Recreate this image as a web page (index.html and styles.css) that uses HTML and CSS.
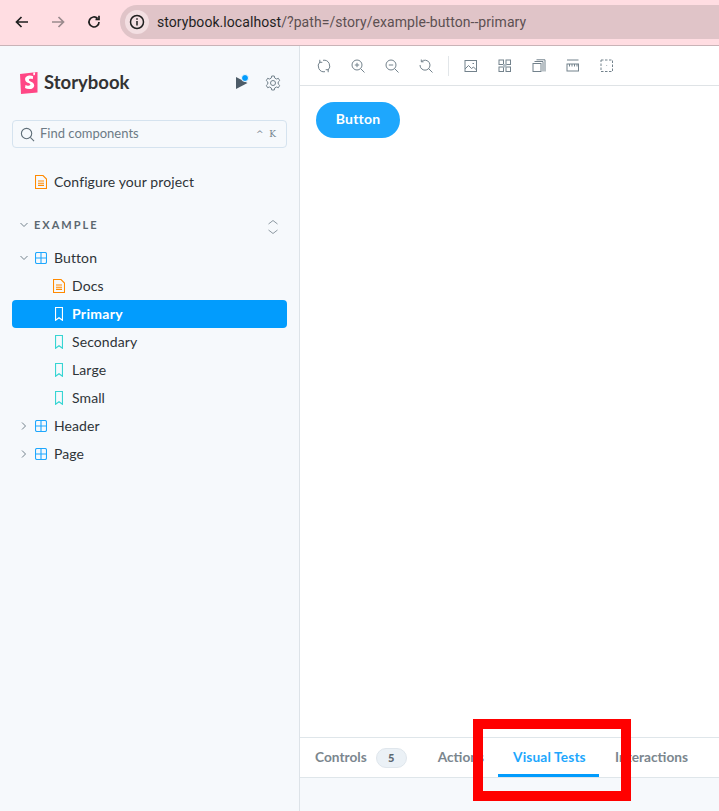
FILE: index.html
```html
<!DOCTYPE html>
<html lang="en">

<head>
  <meta charset="UTF-8">
  <title>Storybook</title>
  <link rel="stylesheet" href="styles.css">
</head>

<body>
  <header class="chrome">
    <svg class="nav-icon" viewBox="0 0 16 16"><path d="M14 8H2.500M7.500 3l-5 5 5 5" /></svg>
    <svg class="nav-icon nav-off" viewBox="0 0 16 16"><path d="M2 8h11.500M8.500 3l5 5-5 5" /></svg>
    <svg class="nav-icon" viewBox="0 0 16 16"><path d="M13 8a5 5 0 1 1-1.500-3.600M13 1.800v3.500H9.500" /></svg>
    <div class="omnibox">
      <span class="site-info">
        <svg viewBox="0 0 16 16" width="16" height="16"><circle cx="8" cy="8" r="6.500" /><path d="M8 7v4.500M8 4.200v1.500" /></svg>
      </span>
      <span class="url">storybook.localhost<span class="url-path">/?path=/story/example-button--primary</span></span>
    </div>
  </header>

  <div class="app">
    <aside class="sidebar">
      <div class="brand">
        <svg class="brand-logo" viewBox="0 0 18 22">
          <path fill="#ff4785" d="M0 2 17.500 0v20.500L1 22z" />
          <path fill="#fff" d="M13.300 .5h1.800l-.1 3-.8-.7-.9.700zM12.800 7.300c-.7-.6-3.900-1-3.900.6 0 1.900 5.300 1.400 5.300 5.500 0 3.900-6 4.500-9.200 2.600l.5-3c1.400.9 4.800 1.300 4.900-.4 0-2-5.300-1.500-5.300-5.400 0-3.800 5.200-4.500 8-3z" />
        </svg>
        <span class="brand-name">Storybook</span>
        <span class="whats-new">
          <svg viewBox="0 0 12 14" width="12" height="14"><path fill="#4d5c68" d="M0 1 11.500 7 0 13z" /></svg>
          <i class="dot"></i>
        </span>
        <svg class="gear" viewBox="0 0 16 16" width="16" height="16">
          <circle cx="8" cy="8" r="2.500" />
          <path d="M6.700 1h2.600l.4 2 1.700 1 2-.7 1.300 2.300-1.500 1.400v2l1.500 1.400-1.300 2.300-2-.7-1.700 1-.4 2H6.700l-.4-2-1.700-1-2 .7-1.300-2.300 1.500-1.400V7L1.300 5.600l1.300-2.300 2 .7 1.700-1z" />
        </svg>
      </div>

      <div class="search">
        <svg viewBox="0 0 16 16" width="15" height="15"><circle cx="7" cy="7" r="5.500" /><path d="m11 11 4 4" /></svg>
        <span class="search-text">Find components</span>
        <span class="search-keys">^ &nbsp;K</span>
      </div>

      <div class="row row-top">
        <svg class="ico doc" viewBox="0 0 12 14"><path d="M.5.500h7.500l3.500 3.500v9.500H.500zM3 6h6M3 8.200h6M3 10.400h6" /></svg>
        Configure your project
      </div>

      <div class="group">
        <svg class="caret" viewBox="0 0 10 10"><path d="m1.500 3 3.500 3.500L8.500 3" /></svg>
        <span class="group-name">EXAMPLE</span>
        <svg class="expand" viewBox="0 0 12 16" width="12" height="16"><path d="M1.500 5 6 1.500 10.500 5M1.500 11 6 14.500l4.500-3.500" /></svg>
      </div>

      <ul class="tree">
        <li class="row">
          <svg class="caret" viewBox="0 0 10 10"><path d="m1.500 3 3.500 3.500L8.500 3" /></svg>
          <svg class="ico comp" viewBox="0 0 12 12"><rect x=".5" y=".5" width="11" height="11" rx="1.500" /><path d="M6 .5v11M.5 6h11" /></svg>
          Button
        </li>
        <li class="row row-leaf">
          <svg class="ico doc" viewBox="0 0 12 14"><path d="M.5.500h7.500l3.500 3.500v9.500H.500zM3 6h6M3 8.200h6M3 10.400h6" /></svg>
          Docs
        </li>
        <li class="row row-leaf row-active">
          <svg class="ico story" viewBox="0 0 8 14"><path d="M.5.500h7v12.800L4 10.800.5 13.300z" /></svg>
          Primary
        </li>
        <li class="row row-leaf">
          <svg class="ico story" viewBox="0 0 8 14"><path d="M.5.500h7v12.800L4 10.800.5 13.300z" /></svg>
          Secondary
        </li>
        <li class="row row-leaf">
          <svg class="ico story" viewBox="0 0 8 14"><path d="M.5.500h7v12.800L4 10.800.5 13.300z" /></svg>
          Large
        </li>
        <li class="row row-leaf">
          <svg class="ico story" viewBox="0 0 8 14"><path d="M.5.500h7v12.800L4 10.800.5 13.300z" /></svg>
          Small
        </li>
        <li class="row">
          <svg class="caret" viewBox="0 0 10 10"><path d="m3 1.500 3.500 3.500L3 8.500" /></svg>
          <svg class="ico comp" viewBox="0 0 12 12"><rect x=".5" y=".5" width="11" height="11" rx="1.500" /><path d="M6 .5v11M.5 6h11" /></svg>
          Header
        </li>
        <li class="row">
          <svg class="caret" viewBox="0 0 10 10"><path d="m3 1.500 3.500 3.500L3 8.500" /></svg>
          <svg class="ico comp" viewBox="0 0 12 12"><rect x=".5" y=".5" width="11" height="11" rx="1.500" /><path d="M6 .5v11M.5 6h11" /></svg>
          Page
        </li>
      </ul>
    </aside>

    <main class="preview">
      <div class="toolbar">
        <span class="tool"><svg viewBox="0 0 14 14"><path d="M3 2.800A5.800 5.800 0 0 0 8 12.700M11 11.200A5.800 5.800 0 0 0 6 1.300M2.800.8v2.500h2.500M11.200 13.200v-2.500H8.700" /></svg></span>
        <span class="tool"><svg viewBox="0 0 14 14"><circle cx="6" cy="6" r="5" /><path d="m9.700 9.700 3.800 3.800M3.800 6h4.400M6 3.800v4.400" /></svg></span>
        <span class="tool"><svg viewBox="0 0 14 14"><circle cx="6" cy="6" r="5" /><path d="m9.700 9.700 3.800 3.800M3.800 6h4.400" /></svg></span>
        <span class="tool"><svg viewBox="0 0 14 14"><path d="M2.500 2.600A5 5 0 1 1 1 6M2.300.5v2.300h2.300M9.700 9.700l3.800 3.800" /></svg></span>
        <span class="tool-sep"></span>
        <span class="tool"><svg viewBox="0 0 14 14"><rect x="1" y="1.500" width="11.500" height="11" /><path d="m1 10 3.500-3.500 3 3 2-1.500 3 3M8.500 4.500h1.500" /></svg></span>
        <span class="tool"><svg viewBox="0 0 14 14"><rect x="1" y="1" width="4.500" height="4.500" /><rect x="8" y="1" width="4.500" height="4.500" /><rect x="1" y="8" width="4.500" height="4.500" /><rect x="8" y="8" width="4.500" height="4.500" /><rect class="tool-fill" x="5" y="5" width="3.500" height="3.500" /></svg></span>
        <span class="tool"><svg viewBox="0 0 14 14"><rect x="1" y="4.500" width="8" height="8" /><path d="M2.500 2.500h8.500v10M4.500.8h8.500v11.700" /></svg></span>
        <span class="tool"><svg viewBox="0 0 14 14"><path d="M1 1h11.500" /><rect x="1" y="5" width="11.500" height="7" /><path d="M3.500 5v2.500M6 5v2.500M8.500 5v2.500M11 5v2.500" /></svg></span>
        <span class="tool"><svg viewBox="0 0 14 14"><rect class="tool-dash" x="1" y="1" width="11.500" height="11.500" /><path d="M6.500 6.500h.6" /></svg></span>
      </div>

      <div class="canvas">
        <button class="story-button">Button</button>
      </div>

      <nav class="tabs">
        <span class="tab">Controls <b class="badge">5</b></span>
        <span class="tab">Actions</span>
        <span class="tab tab-active">Visual Tests</span>
        <span class="tab">Interactions</span>
      </nav>
      <div class="panel"></div>
    </main>
  </div>

  <div class="callout"></div>
</body>

</html>
```

FILE: styles.css
```css
* {
  box-sizing: border-box;
}

html,
body {
  margin: 0;
  height: 100%;
  overflow: hidden;
}

body {
  display: flex;
  flex-direction: column;
  font-family: "Lato", "Open Sans", sans-serif;
  font-size: 14px;
  color: #2e3438;
  background-color: #fff;
}

svg {
  display: block;
  flex: none;
  fill: none;
}

/* browser bar */
.chrome {
  display: flex;
  align-items: center;
  height: 46px;
  padding: 0 0 1px 14px;
  background-color: #ffdde2;
  border-bottom: 1px solid #c9b3b7;
  flex: none;
}

.nav-icon {
  width: 16px;
  height: 16px;
  margin-right: 20px;
  stroke: #1f1f1f;
  stroke-width: 1.700;
}

.nav-off {
  stroke: #9a8a8d;
}

.omnibox {
  display: flex;
  align-items: center;
  flex: 1;
  height: 34px;
  margin-left: -2px;
  padding-left: 5px;
  background-color: #e0c4c8;
  border-radius: 17px 0 0 17px;
}

.site-info {
  display: flex;
  align-items: center;
  justify-content: center;
  width: 24px;
  height: 24px;
  background-color: #f3dfe2;
  border-radius: 50%;
}

.site-info svg {
  stroke: #1f1f1f;
  stroke-width: 1.500;
}

.url {
  margin-left: 8px;
  font-family: "Roboto", "Liberation Sans", sans-serif;
  font-size: 14px;
  letter-spacing: 0.06px;
  color: #1f1f1f;
}

.url-path {
  color: #5c5052;
}

.app {
  display: flex;
  flex: 1;
  min-height: 0;
}

/* sidebar */
.sidebar {
  width: 300px;
  flex: none;
  padding: 0 12px;
  background-color: #f6f9fc;
  border-right: 1px solid #dde3e8;
}

.brand {
  display: flex;
  align-items: center;
  height: 22px;
  margin: 26px 0 0 8px;
}

.brand-logo {
  width: 18px;
  height: 22px;
}

.brand-name {
  margin: -2px 0 0 6px;
  font-size: 18.5px;
  font-weight: 700;
  color: #333;
  flex: 1;
}

.whats-new {
  position: relative;
  margin-right: 17px;
}

.dot {
  position: absolute;
  top: -2px;
  left: 5px;
  width: 8px;
  height: 8px;
  background-color: #029cfd;
  border: 1px solid #f6f9fc;
  border-radius: 50%;
}

.gear {
  margin-right: 6px;
  stroke: #73828c;
  stroke-width: 1;
}

.search {
  display: flex;
  align-items: center;
  height: 28px;
  margin-top: 26px;
  padding: 0 10px 0 7px;
  border: 1px solid #d5e3ef;
  border-radius: 4px;
  color: #6d7b86;
  font-size: 13px;
}

.search svg {
  stroke: #5f6e78;
  stroke-width: 1.200;
}

.search-text {
  flex: 1;
  margin: -3px 0 0 5px;
}

.search-keys {
  font-family: "DejaVu Serif", serif;
  font-size: 9px;
  color: #73828c;
}

.row {
  display: flex;
  align-items: center;
  height: 28px;
  padding: 0 0 2px 7px;
  border-radius: 4px;
  letter-spacing: 0.1px;
}

.row svg {
  margin-top: 2px;
}

.row-top {
  margin-top: 20px;
  padding-left: 23px;
}

.row-leaf {
  padding-left: 41px;
}

.row-active {
  background-color: #029cfd;
  color: #fff;
  font-weight: 700;
  letter-spacing: 0.3px;
}

.row-active .story {
  stroke: #fff;
}

.ico {
  height: 14px;
  margin-right: 7px;
}

.doc {
  width: 12px;
  stroke: #ff8a00;
  stroke-width: 1.100;
}

.comp {
  width: 12px;
  height: 12px;
  stroke: #1ea7fd;
  stroke-width: 1.100;
}

.story {
  width: 8px;
  margin: 0 9px 0 2px;
  stroke: #37d5d3;
  stroke-width: 1.200;
}

.caret {
  width: 10px;
  height: 10px;
  margin-right: 6px;
  stroke: #73828c;
  stroke-width: 1;
}

.group {
  display: flex;
  align-items: center;
  height: 28px;
  margin-top: 15px;
  padding: 0 8px 0 7px;
}

.group .caret {
  margin-right: 5px;
}

.group-name {
  flex: 1;
  margin-top: -2px;
  font-size: 11px;
  font-weight: 700;
  letter-spacing: 2px;
  color: #5c6870;
}

.expand {
  margin-top: 4px;
  stroke: #8d99a2;
  stroke-width: 1;
}

.tree {
  list-style: none;
  margin: 5px 0 0;
  padding: 0;
}

/* preview side */
.preview {
  display: flex;
  flex-direction: column;
  flex: 1;
  min-width: 0;
}

.toolbar {
  display: flex;
  align-items: center;
  gap: 6px;
  height: 40px;
  padding-left: 10px;
  border-bottom: 1px solid #dfe3e6;
  flex: none;
}

.tool {
  display: flex;
  align-items: center;
  justify-content: center;
  width: 28px;
  height: 28px;
}

.tool svg {
  width: 14px;
  height: 14px;
  stroke: #73828c;
  stroke-width: 1;
}

.tool .tool-fill {
  fill: #b6c0c7;
  stroke: none;
}

.tool .tool-dash {
  stroke-dasharray: 2.500 1.500;
}

.tool-sep {
  width: 1px;
  height: 20px;
  margin: 0 2px;
  background-color: #e2e6e9;
}

.canvas {
  flex: 1;
  padding: 16px;
}

.story-button {
  width: 84px;
  height: 36px;
  padding: 0 0 3px;
  border: 0;
  border-radius: 18px;
  background-color: #1ea7fd;
  color: #fff;
  font-family: inherit;
  font-size: 14px;
  font-weight: 700;
  letter-spacing: 0.2px;
}

.tabs {
  display: flex;
  height: 41px;
  padding-left: 15px;
  border-top: 1px solid #dfe6ea;
  border-bottom: 1px solid #dfe6ea;
  flex: none;
  color: #7b868e;
  font-weight: 700;
  font-size: 13.7px;
  white-space: nowrap;
}

.tab {
  display: flex;
  align-items: center;
  height: 36px;
  margin-right: 31px;
}

.tab:nth-child(3) {
  width: 102px;
  margin: 0 16px 0 -17px;
  padding: 1px 0 0 15px;
}

.tab-active {
  color: #1ea7fd;
  height: 39px;
  border-bottom: 3px solid #029cfd;
  letter-spacing: 0.15px;
}

.badge {
  display: flex;
  align-items: center;
  justify-content: center;
  width: 31px;
  height: 20px;
  margin: 3px 0 0 9px;
  background-color: #ebf1f6;
  border: 1px solid #dfe6ec;
  border-radius: 10px;
  color: #5c6870;
  font-size: 11px;
}

.panel {
  height: 33px;
  background-color: #f6f9fc;
  flex: none;
}

/* red highlight drawn over the screenshot */
.callout {
  position: absolute;
  left: 473px;
  top: 719px;
  width: 158px;
  height: 82px;
  border: 10px solid #ff0000;
}
```
